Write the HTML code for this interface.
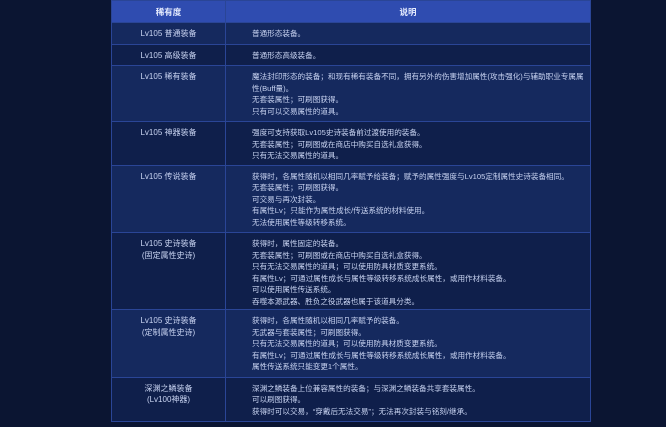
<!DOCTYPE html><html><head><meta charset="utf-8"><style>
body{margin:0;width:666px;height:427px;overflow:hidden;background:#0b1532;font-family:"Liberation Sans","Noto Sans CJK SC",sans-serif;}
table{position:absolute;left:111px;top:0;width:480px;border-collapse:collapse;font-size:7.6px;color:#c9d4f2;}
td,th{border:1px solid #2a4596;padding:0;vertical-align:top;}
th{background:#2f4cb0;color:#e6ecff;height:21px;font-weight:bold;font-size:8.5px;vertical-align:middle;}
td{line-height:11.5px;}
td.a{width:113px;text-align:center;padding-top:5px;font-size:8px;}
td.b{padding:5px 3px 4px 26px;}
tr.s td{height:10px;}
tr.o td{background:#15295e;}
tr.e td{background:#0f1f4b;}
</style></head><body><table>
<tr><th style="width:113px">稀有度</th><th>说明</th></tr>
<tr class="o s"><td class="a">Lv105 普通装备</td><td class="b">普通形态装备。</td></tr>
<tr class="e s"><td class="a">Lv105 高级装备</td><td class="b">普通形态高级装备。</td></tr>
<tr class="o"><td class="a">Lv105 稀有装备</td><td class="b">魔法封印形态的装备；和现有稀有装备不同，拥有另外的伤害增加属性(攻击强化)与辅助职业专属属性(Buff量)。<br>无套装属性；可刷图获得。<br>只有可以交易属性的道具。</td></tr>
<tr class="e"><td class="a">Lv105 神器装备</td><td class="b" style="padding-bottom:3px">强度可支持获取Lv105史诗装备前过渡使用的装备。<br>无套装属性；可刷图或在商店中购买自选礼盒获得。<br>只有无法交易属性的道具。</td></tr>
<tr class="o"><td class="a">Lv105 传说装备</td><td class="b">获得时，各属性随机以相同几率赋予给装备；赋予的属性强度与Lv105定制属性史诗装备相同。<br>无套装属性；可刷图获得。<br>可交易与再次封装。<br>有属性Lv；只能作为属性成长/传送系统的材料使用。<br>无法使用属性等级转移系统。</td></tr>
<tr class="e"><td class="a">Lv105 史诗装备<br>(固定属性史诗)</td><td class="b" style="padding-bottom:2px">获得时，属性固定的装备。<br>无套装属性；可刷图或在商店中购买自选礼盒获得。<br>只有无法交易属性的道具；可以使用防具材质变更系统。<br>有属性Lv；可通过属性成长与属性等级转移系统成长属性，或用作材料装备。<br>可以使用属性传送系统。<br>吞噬本源武器、胜负之役武器也属于该道具分类。</td></tr>
<tr class="o"><td class="a">Lv105 史诗装备<br>(定制属性史诗)</td><td class="b">获得时，各属性随机以相同几率赋予的装备。<br>无武器与套装属性；可刷图获得。<br>只有无法交易属性的道具；可以使用防具材质变更系统。<br>有属性Lv；可通过属性成长与属性等级转移系统成长属性，或用作材料装备。<br>属性传送系统只能变更1个属性。</td></tr>
<tr class="e"><td class="a">深渊之鳞装备<br>(Lv100神器)</td><td class="b">深渊之鳞装备上位兼容属性的装备；与深渊之鳞装备共享套装属性。<br>可以刷图获得。<br>获得时可以交易，“穿戴后无法交易”；无法再次封装与铭刻/继承。</td></tr>
</table></body></html>
